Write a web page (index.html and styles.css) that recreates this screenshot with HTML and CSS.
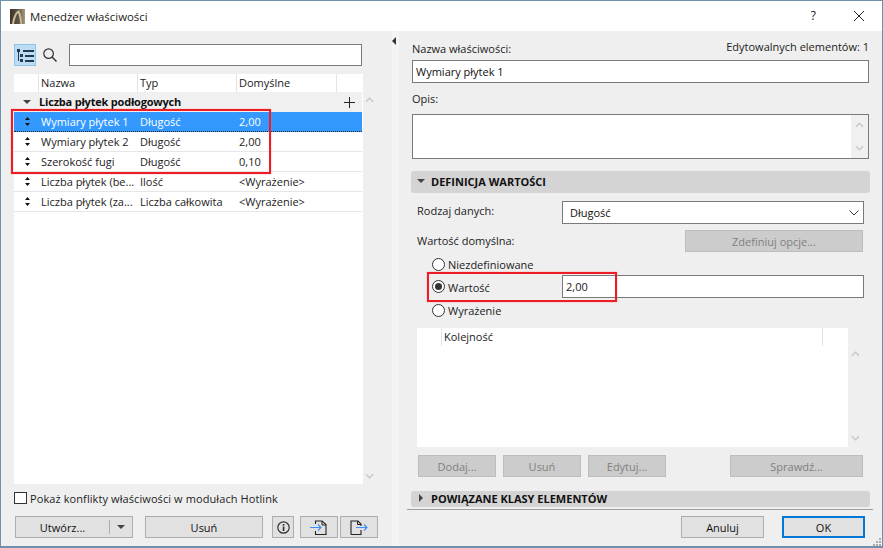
FILE: index.html
```html
<!DOCTYPE html>
<html lang="pl">
<head>
<meta charset="utf-8">
<title>Menedżer właściwości</title>
<link rel="stylesheet" href="styles.css">
</head>
<body>
<div class="window">
  <header class="titlebar">
    <svg class="logo" viewBox="0 0 15 15"><defs><linearGradient id="lg" x1="0" y1="0" x2="1" y2="0"><stop offset="0" stop-color="#3d3327"/><stop offset=".55" stop-color="#5f5342"/><stop offset="1" stop-color="#a89a80"/></linearGradient></defs><rect width="15" height="15" fill="url(#lg)"/><path d="M2 15C3 8 5 3 9 1C11 5 12 10 12 15L10.500 15C10 10 9 6 8 4C6 6 5 10 4 15Z" fill="#c9bca0"/></svg>
    <span class="title">Menedżer właściwości</span>
    <span class="help">?</span>
    <svg class="close" viewBox="0 0 10 10"><path d="M0 0L10 10M10 0L0 10" stroke="#222" stroke-width="1" fill="none"/></svg>
  </header>
  <main class="main">
    <section class="left">
      <div class="toolbar">
        <button class="tree-btn"><svg viewBox="0 0 17 13" width="17" height="13"><g fill="#1f3a4d"><rect x="0" y="0" width="3" height="3"/><rect x="6" y="1" width="11" height="2"/><rect x="3" y="5" width="3" height="3"/><rect x="8" y="6" width="9" height="2"/><rect x="3" y="10" width="3" height="3"/><rect x="8" y="11" width="9" height="2"/><rect x="1" y="3" width="1" height="9"/></g></svg></button>
        <svg class="search" viewBox="0 0 14 14"><circle cx="5.6" cy="5.6" r="4.8" fill="none" stroke="#333" stroke-width="1.2"/><path d="M9 9L13.5 13.5" stroke="#333" stroke-width="1.4"/></svg>
        <div class="field search-field"></div>
      </div>
      <div class="list-wrap">
        <div class="table">
          <div class="thead"><span></span><span>Nazwa</span><span>Typ</span><span>Domyślne</span><span></span></div>
          <div class="group"><i class="tri-down"></i><b>Liczba płytek podłogowych</b><svg class="plus" viewBox="0 0 11 11"><path d="M5.5 0V11M0 5.500H11" stroke="#222" stroke-width="1"/></svg></div>
          <div class="row selected"><svg class="grip" viewBox="0 0 5 9"><path d="M2.500 0L5 3H0ZM2.500 9L0 6H5Z"/></svg><span>Wymiary płytek 1</span><span>Długość</span><span>2,00</span></div>
          <div class="row"><svg class="grip" viewBox="0 0 5 9"><path d="M2.500 0L5 3H0ZM2.500 9L0 6H5Z"/></svg><span>Wymiary płytek 2</span><span>Długość</span><span>2,00</span></div>
          <div class="row"><svg class="grip" viewBox="0 0 5 9"><path d="M2.500 0L5 3H0ZM2.500 9L0 6H5Z"/></svg><span>Szerokość fugi</span><span>Długość</span><span>0,10</span></div>
          <div class="row"><svg class="grip" viewBox="0 0 5 9"><path d="M2.500 0L5 3H0ZM2.500 9L0 6H5Z"/></svg><span>Liczba płytek (be...</span><span>Ilość</span><span>&lt;Wyrażenie&gt;</span></div>
          <div class="row"><svg class="grip" viewBox="0 0 5 9"><path d="M2.500 0L5 3H0ZM2.500 9L0 6H5Z"/></svg><span>Liczba płytek (za...</span><span>Liczba całkowita</span><span>&lt;Wyrażenie&gt;</span></div>
          <div class="redbox red-rows"></div>
        </div>
        <div class="scroll list-scroll">
          <svg class="chev" viewBox="0 0 10 6"><path d="M1 5L5 1L9 5" /></svg>
          <svg class="chev" viewBox="0 0 10 6"><path d="M1 1L5 5L9 1" /></svg>
        </div>
      </div>
      <label class="check-row"><span class="checkbox"></span>Pokaż konflikty właściwości w modułach Hotlink</label>
      <div class="actions">
        <div class="btn split"><span class="split-main">Utwórz...</span><span class="split-arrow"><i class="tri-down"></i></span></div>
        <div class="btn remove">Usuń</div>
        <div class="btn info"><svg viewBox="0 0 13 13" width="13" height="13"><circle cx="6.500" cy="6.500" r="5.700" fill="none" stroke="#333" stroke-width="1.200"/><rect x="5.700" y="5.500" width="1.700" height="4.500" fill="#333"/><rect x="5.700" y="3" width="1.700" height="1.700" fill="#333"/></svg></div>
        <div class="btn file"><svg viewBox="0 0 18 15" width="18" height="15"><path d="M5.500 4V1H12L16 4.500V14.500H5.500V11" fill="none" stroke="#222" stroke-width="1.100"/><path d="M12 1V5H16" fill="none" stroke="#222"/><path d="M0 7.500H11M8 4.500L11 7.500L8 10.500" fill="none" stroke="#3d8ff0" stroke-width="1.100"/></svg></div>
        <div class="btn file"><svg viewBox="0 0 18 15" width="18" height="15"><path d="M1 14.500V1H8L11 4V6M11 10V14.500H1" fill="none" stroke="#222" stroke-width="1.100"/><path d="M7.500 1V4.500H11" fill="none" stroke="#222"/><path d="M6 7.500H17M14 4.500L17 7.500L14 10.500" fill="none" stroke="#3d8ff0" stroke-width="1.100"/></svg></div>
      </div>
    </section>
    <div class="splitter"><i class="tri-left"></i></div>
    <section class="right">
      <div class="name-head"><span class="name-label">Nazwa właściwości:</span><span class="editable">Edytowalnych elementów: 1</span></div>
      <div class="field name-field">Wymiary płytek 1</div>
      <div class="opis-label">Opis:</div>
      <div class="field opis-field"><div class="scroll opis-scroll"><svg class="chev" viewBox="0 0 10 6"><path d="M1 5L5 1L9 5" /></svg><svg class="chev" viewBox="0 0 10 6"><path d="M1 1L5 5L9 1" /></svg></div></div>
      <div class="section def-head"><i class="tri-down"></i>DEFINICJA WARTOŚCI</div>
      <div class="def">
        <div class="line type-line"><span class="line-label">Rodzaj danych:</span><div class="field select">Długość<svg class="sel-chev" viewBox="0 0 10 6"><path d="M0.500 0.500L5 5L9.500 0.500" fill="none" stroke="#333"/></svg></div></div>
        <div class="line default-line"><span class="line-label">Wartość domyślna:</span><div class="btn disabled define">Zdefiniuj opcje...</div></div>
        <div class="radio-row r1"><span class="radio"></span>Niezdefiniowane</div>
        <div class="radio-row r2"><span class="radio on"></span><span class="radio-text">Wartość</span><div class="field value-field">2,00</div><div class="redbox red-value"></div></div>
        <div class="radio-row r3"><span class="radio"></span>Wyrażenie</div>
        <div class="order-wrap">
          <div class="order">
            <div class="order-head"><span></span><span>Kolejność</span><span></span></div>
          </div>
          <div class="scroll order-scroll"><svg class="chev" viewBox="0 0 10 6"><path d="M1 5L5 1L9 5" /></svg><svg class="chev" viewBox="0 0 10 6"><path d="M1 1L5 5L9 1" /></svg></div>
        </div>
        <div class="order-btns">
          <div class="btn disabled small">Dodaj...</div>
          <div class="btn disabled small">Usuń</div>
          <div class="btn disabled small">Edytuj...</div>
          <div class="btn disabled check">Sprawdź...</div>
        </div>
      </div>
      <div class="section rel-head"><i class="tri-right"></i>POWIĄZANE KLASY ELEMENTÓW</div>
      <div class="footer">
        <div class="btn cancel">Anuluj</div>
        <div class="btn ok">OK</div>
      </div>
      <svg class="resize" viewBox="0 0 8 8"><g fill="#aaa"><rect x="6" y="0" width="2" height="2"/><rect x="3" y="3" width="2" height="2"/><rect x="6" y="3" width="2" height="2"/><rect x="0" y="6" width="2" height="2"/><rect x="3" y="6" width="2" height="2"/><rect x="6" y="6" width="2" height="2"/></g></svg>
    </section>
  </main>
</div>
</body>
</html>
```
FILE: styles.css
```css
* { box-sizing: border-box; }
html, body { margin: 0; padding: 0; }
body { width: 883px; height: 548px; overflow: hidden; font-family: "Open Sans", "Noto Sans", sans-serif; font-size: 11px; color: #111; }
.window { width: 883px; height: 548px; border: 1px solid #6f90ab; border-bottom-width: 2px; display: flex; flex-direction: column; background: #efefef; }
.titlebar { height: 30px; flex: none; background: #fff; display: flex; align-items: center; padding-left: 9px; }
.logo { width: 15px; height: 15px; margin-right: 5px; }
.title { font-size: 11.4px; flex: 1; color: #222; }
.help { font-size: 12px; margin-right: 38px; margin-top: -2px; }
.close { width: 10px; height: 10px; margin-right: 18px; }
.main { flex: 1; display: flex; min-height: 0; }

.left { width: 391px; flex: none; padding: 13px 0 0 13px; display: flex; flex-direction: column; }
.toolbar { display: flex; align-items: center; height: 22px; width: 348px; }
.tree-btn { width: 22px; height: 22px; padding: 0; background: #bcdcf4; border: 1px solid #8fc3ea; display: flex; align-items: center; justify-content: center; }
.search { width: 14px; height: 14px; margin-left: 7px; margin-right: 12px; }
.field { background: #fff; border: 1px solid #7a7a7a; }
.search-field { flex: 1; height: 22px; }
.list-wrap { display: flex; margin-top: 8px; height: 410px; width: 362px; }
.table { width: 349px; background: #fff; position: relative; }
.thead { height: 18px; display: grid; grid-template-columns: 24px 99px 99px 100px 26px; width: 348px; align-items: center; }
.thead span { height: 18px; line-height: 18px; padding-left: 2px; border-left: 1px solid #e4e4e4; color: #222; }
.thead span:first-child { border-left: 0; }
.group { height: 20px; width: 348px; background: #f0f0f0; display: flex; align-items: center; padding-left: 9px; }
.group b { margin-left: 8px; margin-top: -2px; font-weight: 700; flex: 1; font-size: 11px; letter-spacing: -0.2px; }
.plus { width: 11px; height: 11px; margin-right: 7px; }
.tri-down { width: 0; height: 0; border-left: 4px solid transparent; border-right: 4px solid transparent; border-top: 4px solid #444; display: block; flex: none; }
.tri-right { width: 0; height: 0; border-top: 4px solid transparent; border-bottom: 4px solid transparent; border-left: 4px solid #444; display: block; flex: none; }
.tri-left { width: 0; height: 0; border-top: 4px solid transparent; border-bottom: 4px solid transparent; border-right: 4px solid #333; display: block; }
.row { height: 20px; width: 348px; display: grid; grid-template-columns: 24px 99px 99px 1fr; align-items: center; border-bottom: 1px solid #e6e6e6; }
.row > span { padding-left: 3px; white-space: nowrap; color: #222; }
.row.selected { background: #3399ff; border-bottom: 1px dotted #222; }
.row.selected > span { color: #fff; }
.grip { width: 5px; height: 9px; margin-left: 11px; fill: #111; }
.redbox { position: absolute; border: 2px solid #ee1c25; box-shadow: 0 0 1px #f77; pointer-events: none; }
.red-rows { left: -3px; top: 35px; width: 260px; height: 65px; }
.scroll { display: flex; flex-direction: column; justify-content: space-between; align-items: center; }
.chev { width: 9px; height: 6px; fill: none; stroke: #c8c8c8; stroke-width: 1.600; }
.list-scroll { width: 13px; padding: 23px 0 5px 0; }
.check-row { display: flex; align-items: center; margin-top: 7px; height: 14px; color: #222; letter-spacing: 0.09px; }
.checkbox { width: 13px; height: 12px; background: #fff; border: 1px solid #333; margin-right: 3px; }
.actions { display: flex; margin-top: 11px; margin-left: 1px; height: 22px; }
.btn { height: 22px; border: 1px solid #adadad; background: #e1e1e1; display: flex; align-items: center; justify-content: center; color: #111; flex: none; }
.split { width: 118px; }
.split-main { flex: 1; text-align: center; }
.split-arrow { width: 23px; height: 14px; border-left: 1px solid #adadad; display: flex; align-items: center; justify-content: center; }
.remove { width: 118px; margin-left: 12px; }
.info { width: 22px; margin-left: 9px; }
.file { width: 38px; margin-left: 6px; }
.file + .file { margin-left: 2px; }

.splitter { width: 7px; flex: none; background: #f4f4f4; padding: 6px 0 0 0; }
.right { flex: 1; position: relative; padding: 0 0 0 13px; display: flex; flex-direction: column; min-width: 0; }
.name-head { display: flex; justify-content: space-between; width: 457px; height: 29px; padding-top: 8px; color: #222; }
.name-label { padding-top: 2px; }
.name-field { width: 457px; height: 23px; line-height: 21px; padding-left: 3px; }
.opis-label { margin-top: 8px; height: 23px; line-height: 15px; color: #222; }
.opis-field { width: 457px; height: 45px; display: flex; justify-content: flex-end; }
.opis-scroll { width: 17px; height: 43px; background: #f0f0f0; padding: 7px 0; }
.section { margin-left: -1px; width: 459px; background: #d4d4d4; border-radius: 3px; display: flex; align-items: center; font-weight: 700; font-size: 11px; color: #111; }
.def-head { margin-top: 12px; height: 22px; padding: 0 0 2px 6px; }
.def-head .tri-down { margin-right: 6px; }
.rel-head { height: 16px; padding: 0 0 2px 8px; }
.rel-head .tri-right { margin-right: 8px; }
.def { height: 298px; padding-left: 5px; position: relative; }
.line { display: flex; align-items: center; }
.line-label { width: 145px; color: #222; }
.type-line .line-label { margin-bottom: 4px; }
.type-line { margin-top: 8px; height: 23px; }
.select { width: 302px; height: 23px; display: flex; align-items: center; justify-content: space-between; padding: 0 4px 0 7px; }
.sel-chev { width: 10px; height: 6px; }
.default-line { margin-top: 6px; height: 22px; }
.default-line .line-label { width: 268px; margin-top: -2px; }
.disabled { background: #ccc; border-color: #bdbdbd; color: #808080; }
.define { width: 178px; }
.radio-row { display: flex; align-items: center; color: #222; margin-left: 15px; position: relative; }
.radio { width: 13px; height: 13px; border-radius: 50%; border: 1px solid #333; background: #fff; margin-right: 3px; position: relative; flex: none; }
.radio.on::after { content: ""; position: absolute; left: 2px; top: 2px; width: 7px; height: 7px; border-radius: 50%; background: #333; }
.r1 { margin-top: 5px; height: 14px; }
.r2 { margin-top: 4px; height: 23px; }
.radio-text { width: 114px; padding-top: 2px; }
.value-field { width: 302px; height: 23px; line-height: 22px; padding-left: 3px; }
.red-value { left: -5px; top: -3px; width: 190px; height: 30px; }
.r3 { margin-top: 5px; height: 14px; }
.order-wrap { display: flex; margin-top: 11px; height: 119px; }
.order { width: 431px; background: #fff; }
.order-head { display: grid; grid-template-columns: 24px 381px 24px; height: 18px; width: 429px; align-items: center; }
.order-head span { height: 18px; line-height: 18px; padding-left: 2px; border-left: 1px solid #e4e4e4; color: #222; }
.order-head span:first-child { border-left: 0; }
.order-scroll { width: 14px; padding: 23px 0 6px 0; }
.order-btns { display: flex; margin-top: 8px; margin-left: 1px; }
.small { width: 78px; margin-right: 7px; }
.check { width: 133px; margin-left: 57px; }
.footer { display: flex; margin-top: 2px; width: 466px; margin-left: -5px; border-top: 1px solid #a0a0a0; justify-content: flex-end; padding: 6px 8px 0 0; }
.cancel { width: 83px; margin-right: 18px; }
.ok { width: 83px; background: #e1e1e1; border: 2px solid #0078d7; }
.resize { position: absolute; right: 1px; bottom: 0; width: 8px; height: 8px; }
```
